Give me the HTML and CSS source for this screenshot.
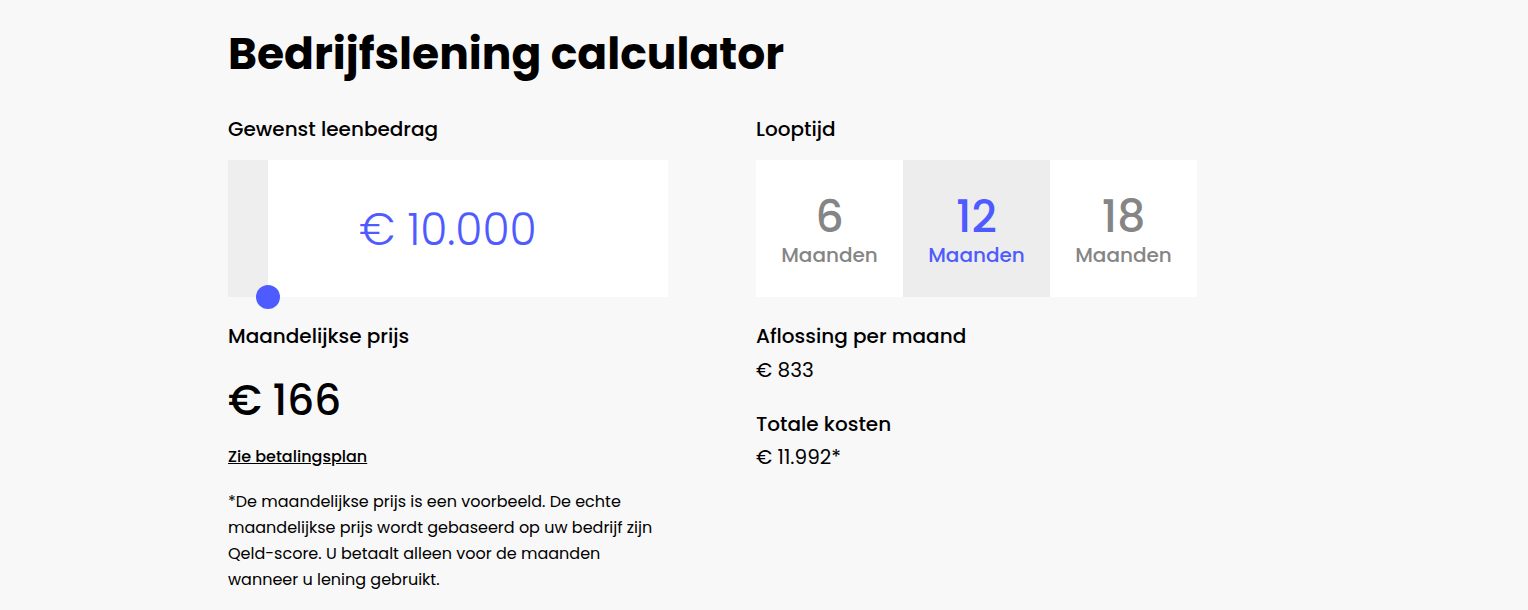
FILE: index.html
```html
<!DOCTYPE html>
<html>
<head>
<title>Bedrijfslening calculator</title>
<meta name="viewport" content="width=device-width, initial-scale=1">
<link rel="stylesheet" href="styles.css">
</head>
<body>

<div class="calculator">
  <h1>Bedrijfslening calculator</h1>

  <div class="columns">
    <div class="col">
      <h4>Gewenst leenbedrag</h4>
      <div class="amount-box">
        <div class="fill"></div>
        <div class="handle"></div>
        <span class="amount">€ 10.000</span>
      </div>

      <h4 class="price-label">Maandelijkse prijs</h4>
      <p class="price">€ 166</p>
      <a class="plan" href="#">Zie betalingsplan</a>
      <p class="note">*De maandelijkse prijs is een voorbeeld. De echte maandelijkse prijs wordt gebaseerd op uw bedrijf zijn Qeld-score. U betaalt alleen voor de maanden wanneer u lening gebruikt.</p>
    </div>

    <div class="col">
      <h4>Looptijd</h4>
      <div class="terms">
        <button class="term"><span class="num">6</span>Maanden</button>
        <button class="term active"><span class="num">12</span>Maanden</button>
        <button class="term"><span class="num">18</span>Maanden</button>
      </div>

      <h4 class="price-label">Aflossing per maand</h4>
      <p class="value">€ 833</p>
      <h4 class="cost-label">Totale kosten</h4>
      <p class="value">€ 11.992*</p>
    </div>
  </div>
</div>

</body>
</html>
```

FILE: styles.css
```css
body {
  margin: 0;
  background-color: #f8f8f8;
  color: #000;
  font-family: "Poppins", "Open Sans", sans-serif;
}

.calculator {
  padding: 24px 0 0 228px;
}

h1 {
  margin: 0;
  font-size: 44px;
  font-weight: 700;
  line-height: 60px;
}

.columns {
  display: flex;
  gap: 88px;
  margin-top: 33px;
}

.col {
  width: 440px;
}

h4 {
  margin: 0 0 19px;
  font-size: 20px;
  font-weight: 500;
  line-height: 24px;
}

.amount-box {
  position: relative;
  height: 137px;
  background-color: #fff;
  display: flex;
  align-items: center;
  justify-content: center;
}

.fill {
  position: absolute;
  left: 0;
  top: 0;
  bottom: 0;
  width: 40px;
  background-color: #eeeeee;
}

.handle {
  position: absolute;
  left: 28px;
  bottom: -12px;
  width: 24px;
  height: 24px;
  border-radius: 50%;
  background-color: #4d5bff;
}

.amount {
  padding-top: 1px;
  color: #4d5bff;
  font-size: 44px;
  font-weight: 300;
}

.price-label {
  margin-top: 27px;
  margin-bottom: 23px;
}

.price {
  margin: 0;
  font-size: 42px;
  font-weight: 500;
  line-height: 60px;
}

.plan {
  display: inline-block;
  margin-top: 14px;
  color: #000;
  font-size: 16px;
  font-weight: 500;
  line-height: 24px;
}

.note {
  margin: 20px 0 0;
  font-size: 16px;
  line-height: 26px;
}

.terms {
  display: flex;
  width: 441px;
}

.term {
  width: 147px;
  height: 137px;
  padding: 7px 0 0;
  border: none;
  background-color: #fff;
  color: #858585;
  font-family: inherit;
  font-size: 20px;
  font-weight: 500;
  line-height: 30px;
  display: flex;
  flex-direction: column;
  align-items: center;
  justify-content: center;
  cursor: pointer;
}

.term .num {
  font-size: 44px;
  line-height: 46px;
}

.term.active {
  background-color: #ededed;
  color: #4d5bff;
}

.value {
  margin: 0;
  font-size: 20px;
  line-height: 24px;
}

.price-label + .value {
  margin-top: -13px;
}

.cost-label {
  margin-top: 30px;
  margin-bottom: 9px;
}
```
